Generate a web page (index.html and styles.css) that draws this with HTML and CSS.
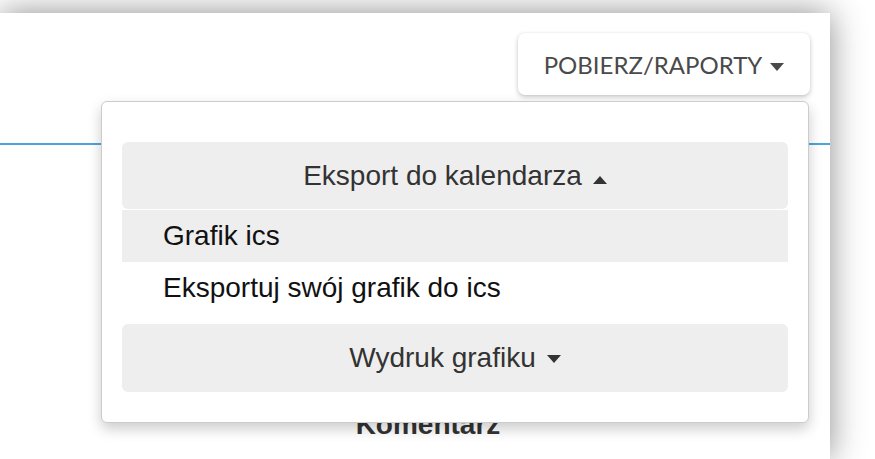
FILE: index.html
```html
<!DOCTYPE html>
<html lang="pl">
<head>
<meta charset="utf-8">
<title>Pobierz / Raporty</title>
<link rel="stylesheet" href="styles.css">
</head>
<body>
<div class="card">
  <div class="toolbar">
    <div class="dropdown">
      <button class="btn">POBIERZ/RAPORTY<span class="caret caret-btn"></span></button>
      <div class="menu">
        <div class="section-head">Eksport do kalendarza<span class="caret caret-up"></span></div>
        <ul class="items">
          <li class="item active">Grafik ics</li>
          <li class="item">Eksportuj swój grafik do ics</li>
        </ul>
        <div class="section-head section-print">Wydruk grafiku<span class="caret caret-down"></span></div>
      </div>
    </div>
  </div>
  <div class="content">
    <h3 class="title">Komentarz</h3>
  </div>
</div>
</body>
</html>
```
FILE: styles.css
```css
html, body {
  margin: 0;
  padding: 0;
  background: #fff;
  height: 100%;
  overflow: hidden;
}

.card {
  box-sizing: border-box;
  margin-top: 13px;
  width: 830px;
  height: 446px;
  background: #fff;
  box-shadow: 0 0 32px rgba(0, 0, 0, 0.45);
}

.toolbar {
  display: flex;
  justify-content: flex-end;
  padding: 20px 20px 0;
  height: 110px;
  border-bottom: 2px solid #4fa3d9;
}

.dropdown {
  position: relative;
  height: 62px;
}

.btn {
  box-sizing: border-box;
  width: 292px;
  height: 62px;
  display: flex;
  align-items: center;
  justify-content: center;
  gap: 8px;
  padding: 0;
  border: none;
  border-radius: 7px;
  background: #fff;
  color: #4a4a4a;
  font-family: Lato, "Liberation Sans", sans-serif;
  font-size: 24px;
  box-shadow: 0 2px 5px rgba(0, 0, 0, 0.22), 0 0 2px rgba(0, 0, 0, 0.06);
}

.caret {
  display: inline-block;
  width: 0;
  height: 0;
  border-left: 7.5px solid transparent;
  border-right: 7.5px solid transparent;
  border-top: 8px solid currentColor;
}

.caret-btn {
  margin-top: 6px;
}

.caret-up {
  border-top: 0;
  border-bottom: 8px solid currentColor;
  margin-top: 8px;
}

.caret-down {
  margin-top: 2px;
}

.menu {
  position: absolute;
  top: 68px;
  right: 1px;
  box-sizing: border-box;
  width: 708px;
  padding: 40px 20px 30px;
  border: 1px solid #ccc;
  border-radius: 6px;
  background: #fff;
  box-shadow: 0 6px 14px rgba(0, 0, 0, 0.2);
  font-family: "Liberation Sans", Arial, sans-serif;
  font-size: 28px;
  z-index: 2;
}

.section-head {
  height: 67px;
  display: flex;
  align-items: center;
  justify-content: center;
  gap: 11px;
  background: #eee;
  border-radius: 6px;
  color: #333;
}

.section-print {
  height: 68px;
  margin-top: 10px;
}

.items {
  list-style: none;
  margin: 1px 0 0;
  padding: 0;
}

.item {
  height: 52px;
  display: flex;
  align-items: center;
  padding-left: 41px;
  color: #111;
}

.item.active {
  background: #eee;
}

.content {
  padding: 264px 0 0 26px;
  text-align: center;
}

.title {
  margin: 0;
  font-family: "Liberation Sans", Arial, sans-serif;
  font-weight: bold;
  font-size: 28px;
  line-height: 32px;
  color: #333;
}
```
